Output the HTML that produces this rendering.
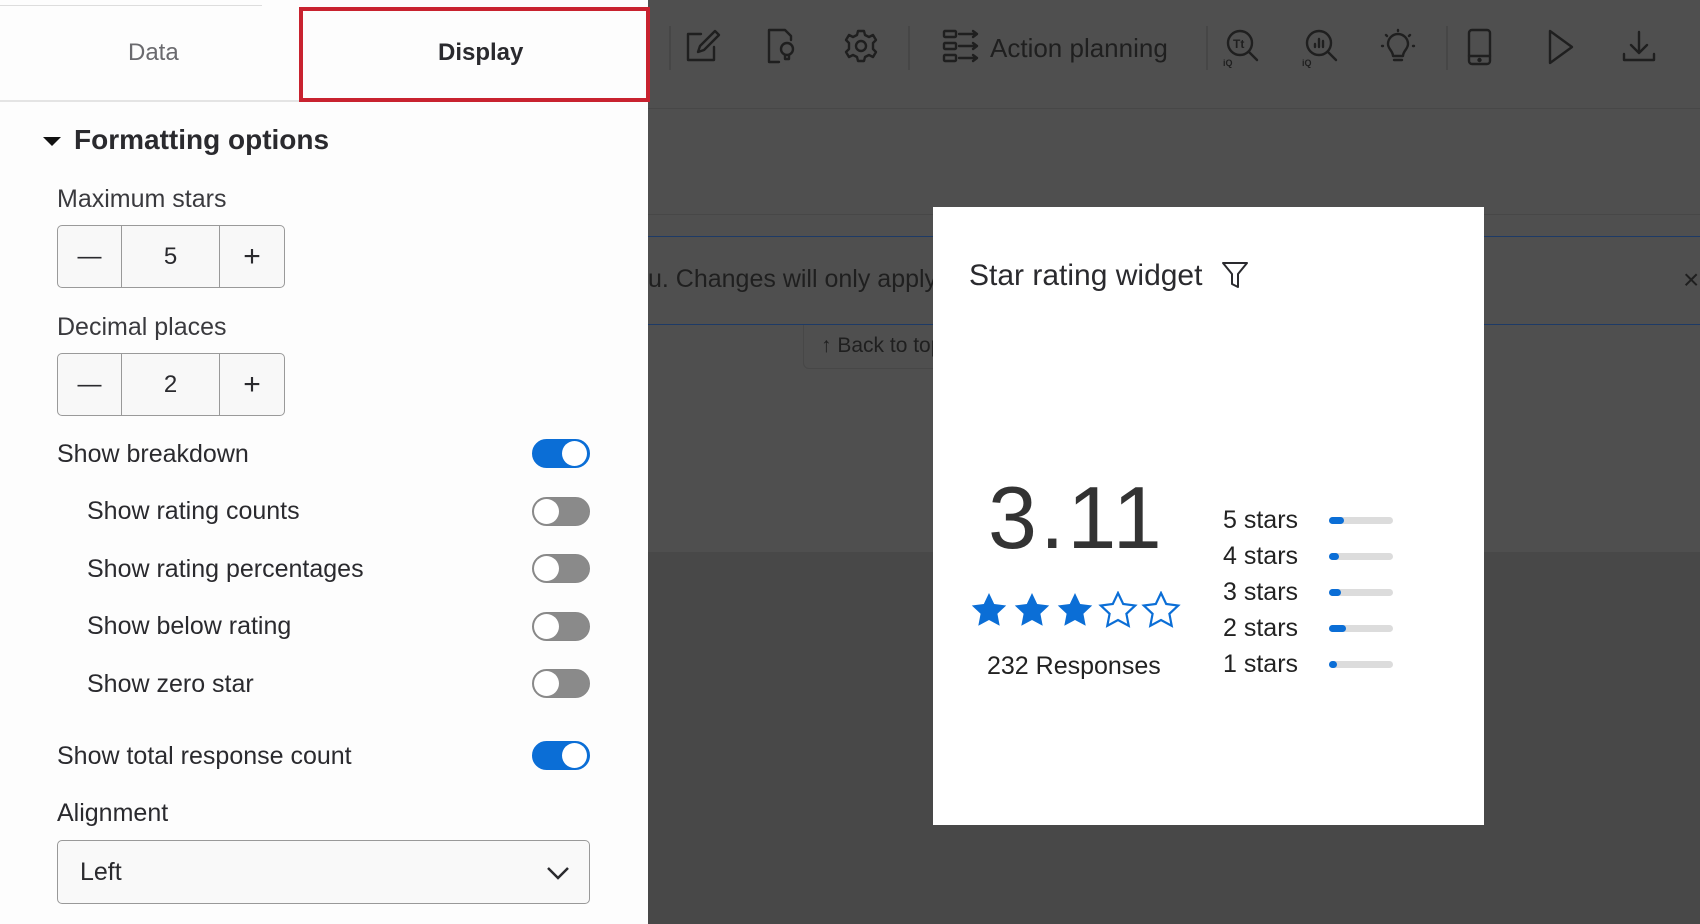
<!DOCTYPE html>
<html><head><meta charset="utf-8"><style>
*{margin:0;padding:0;box-sizing:border-box}
body{width:1700px;height:924px;overflow:hidden;position:relative;background:#4f4f4f;font-family:"Liberation Sans",sans-serif}
.abs{position:absolute}
.panel{left:0;top:0;width:648px;height:924px;background:#fdfdfd}
.t{position:absolute;white-space:nowrap;color:#2a2a2e;font-size:25px;line-height:1}
.step{position:absolute;left:57px;width:228px;height:63px;border:1px solid #9a9a9a;border-radius:5px;background:#f8f8f8}
.step div{position:absolute;top:0;height:100%;display:flex;align-items:center;justify-content:center;font-size:24px;color:#2a2a2e}
.tog{position:absolute;left:532px;width:58px;height:29px;border-radius:15px;background:#8a8a8a;border:1px solid #888}
.tog::after{content:"";position:absolute;top:1px;left:1px;width:25px;height:25px;border-radius:50%;background:#fff}
.tog.on{background:#0b6ed6;border-color:#0b6ed6}
.tog.on::after{left:29px}
.ic{position:absolute;top:28px;stroke:#1f1f1f;fill:none;stroke-width:2.4;stroke-linecap:round;stroke-linejoin:round}
.sep{position:absolute;top:26px;width:2px;height:44px;background:#464646}
.card{left:933px;top:207px;width:551px;height:618px;background:#fff}
.bar{position:absolute;left:1329px;width:64px;height:7px;border-radius:4px;background:#dcdcdc}
.bar i{position:absolute;left:0;top:0;height:7px;border-radius:4px;background:#0b6ed6}
</style></head><body>
<div class="abs" style="left:0;top:552px;width:1700px;height:372px;background:#484848"></div>
<div class="abs" style="left:648px;top:108px;width:1052px;height:1px;background:#474747"></div>
<div class="abs" style="left:648px;top:214px;width:1052px;height:1px;background:#474747"></div>
<div class="abs" style="left:648px;top:236px;width:1052px;height:1px;background:#1d3a66"></div>
<div class="abs" style="left:648px;top:324px;width:1052px;height:1px;background:#1d3a66"></div>
<div class="t" style="left:648px;top:267px;font-size:25px;color:#1f1f1f">u. Changes will only apply</div>
<div class="t" style="left:1683px;top:266px;font-size:28px;color:#1f1f1f">×</div>
<div class="abs" style="left:803px;top:325px;width:150px;height:44px;border:1px solid #474747;border-top:none;border-radius:0 0 6px 6px"></div>
<div class="t" style="left:821px;top:335px;font-size:21px;color:#1f1f1f">↑ Back to top</div>

<!-- toolbar -->
<div class="sep" style="left:669px"></div>
<svg class="ic" style="left:685px" width="36" height="36" viewBox="0 0 36 36"><path d="M16 6H3v26h26V19"/><path d="M30 3l4 4-15 15-6 2 2-6z"/></svg>
<svg class="ic" style="left:765px" width="36" height="36" viewBox="0 0 36 36"><path d="M14 34H4V2h16l6 6v4"/><circle cx="22" cy="21" r="6"/><path d="M20 27v4h4v-4"/></svg>
<svg class="ic" style="left:843px" width="36" height="36" viewBox="0 0 36 36"><circle cx="18" cy="18" r="5"/><path d="M15 3h6l1 4 4 2 4-2 3 5-3 3v6l3 3-3 5-4-2-4 2-1 4h-6l-1-4-4-2-4 2-3-5 3-3v-6l-3-3 3-5 4 2 4-2z"/></svg>
<div class="sep" style="left:908px"></div>
<svg class="ic" style="left:942px" width="40" height="36" viewBox="0 0 40 36"><rect x="2" y="3" width="12" height="6" rx="1"/><rect x="2" y="15" width="12" height="6" rx="1"/><rect x="2" y="27" width="12" height="6" rx="1"/><path d="M17 6h18M31 3l4 3-4 3M17 18h18M31 15l4 3-4 3M17 30h18M31 27l4 3-4 3"/></svg>
<div class="t" style="left:990px;top:35px;font-size:26px;color:#1f1f1f">Action planning</div>
<div class="sep" style="left:1206px"></div>
<svg class="ic" style="left:1222px" width="40" height="40" viewBox="0 0 40 40"><circle cx="18" cy="15" r="12"/><path d="M27 24l8 8"/><text x="11" y="20" font-size="12" font-weight="bold" fill="#1f1f1f" stroke="none" font-family="Liberation Sans">Tt</text><text x="1" y="38" font-size="9" font-weight="bold" fill="#1f1f1f" stroke="none" font-family="Liberation Sans">iQ</text></svg>
<svg class="ic" style="left:1301px" width="40" height="40" viewBox="0 0 40 40"><circle cx="18" cy="15" r="12"/><path d="M27 24l8 8M14 19v-3M18 19v-8M22 19v-6"/><text x="1" y="38" font-size="9" font-weight="bold" fill="#1f1f1f" stroke="none" font-family="Liberation Sans">iQ</text></svg>
<svg class="ic" style="left:1380px" width="36" height="38" viewBox="0 0 36 38"><path d="M18 2v1M6 7l1 1M30 7l-1 1M2 18h1M34 18h-1"/><path d="M13 28c0-5-5-7-5-12a10 10 0 0 1 20 0c0 5-5 7-5 12z"/><path d="M14 32h8"/></svg>
<div class="sep" style="left:1446px"></div>
<svg class="ic" style="left:1467px" width="26" height="38" viewBox="0 0 26 38"><rect x="2" y="2" width="21" height="34" rx="3"/><path d="M2 28h21"/><circle cx="12.5" cy="32" r="1" fill="#1f1f1f"/></svg>
<svg class="ic" style="left:1547px" width="28" height="38" viewBox="0 0 28 38"><path d="M3 3v32l22-16z"/></svg>
<svg class="ic" style="left:1621px" width="36" height="38" viewBox="0 0 36 38"><path d="M18 4v20M10 17l8 8 8-8M3 26v6h30v-6"/></svg>

<!-- panel -->
<div class="abs panel"></div>
<div class="abs" style="left:0;top:5px;width:262px;height:1px;background:#ddd"></div>
<div class="abs" style="left:0;top:100px;width:300px;height:2px;background:#e4e4e4"></div>
<div class="t" style="left:128px;top:41px;font-size:24px;color:#6a6a6e">Data</div>
<div class="abs" style="left:299px;top:7px;width:351px;height:95px;border:4px solid #c8222f"></div>
<div class="t" style="left:438px;top:41px;font-size:24px;font-weight:bold;color:#2a2a2e">Display</div>
<div class="abs" style="left:43px;top:137px;width:0;height:0;border-left:9px solid transparent;border-right:9px solid transparent;border-top:9px solid #111"></div>
<div class="t" style="left:74px;top:126px;font-size:28px;font-weight:bold;color:#2a2a2e">Formatting options</div>
<div class="t" style="left:57px;top:187px;color:#3a3a3e">Maximum stars</div>
<div class="step" style="top:225px"><div style="left:0;width:64px;border-right:1px solid #999">—</div><div style="left:64px;width:98px;border-right:1px solid #999">5</div><div style="left:162px;width:64px;font-size:30px;font-weight:300">+</div></div>
<div class="t" style="left:57px;top:315px;color:#3a3a3e">Decimal places</div>
<div class="step" style="top:353px"><div style="left:0;width:64px;border-right:1px solid #999">—</div><div style="left:64px;width:98px;border-right:1px solid #999">2</div><div style="left:162px;width:64px;font-size:30px;font-weight:300">+</div></div>
<div class="t" style="left:57px;top:442px">Show breakdown</div><div class="tog on" style="top:439px"></div>
<div class="t" style="left:87px;top:499px">Show rating counts</div><div class="tog" style="top:497px"></div>
<div class="t" style="left:87px;top:557px">Show rating percentages</div><div class="tog" style="top:554px"></div>
<div class="t" style="left:87px;top:614px">Show below rating</div><div class="tog" style="top:612px"></div>
<div class="t" style="left:87px;top:672px">Show zero star</div><div class="tog" style="top:669px"></div>
<div class="t" style="left:57px;top:744px">Show total response count</div><div class="tog on" style="top:741px"></div>
<div class="t" style="left:57px;top:801px">Alignment</div>
<div class="abs" style="left:57px;top:840px;width:533px;height:64px;border:1px solid #999;border-radius:5px;background:#f9f9f9"></div>
<div class="t" style="left:80px;top:860px">Left</div>
<svg class="abs" style="left:546px;top:866px" width="24" height="14" viewBox="0 0 24 14"><path d="M2 2l10 10 10-10" stroke="#2a2a2e" stroke-width="2.5" fill="none"/></svg>

<!-- card -->
<div class="abs card"></div>
<div class="t" style="left:969px;top:261px;font-size:30px;color:#2a2a2e">Star rating widget</div>
<svg class="abs" style="left:1221px;top:260px" width="28" height="30" viewBox="0 0 28 30"><path d="M2 3h24l-9 11v13l-6-3V14z" stroke="#2a2a2e" stroke-width="2" fill="none" stroke-linejoin="round"/></svg>
<div class="t" style="left:988px;top:474px;font-size:88px;color:#333;letter-spacing:3px">3.11</div>
<svg class="abs" style="left:970px;top:591px" width="218" height="40" viewBox="0 0 218 40">
<defs><path id="s" d="M19 2l5.2 11 12 1.5-8.8 8.3 2.3 12L19 29l-10.7 5.8 2.3-12L1.8 14.5l12-1.5z"/></defs>
<use href="#s" fill="#0b6ed6"/><use href="#s" x="43" fill="#0b6ed6"/><use href="#s" x="86" fill="#0b6ed6"/>
<use href="#s" x="129" fill="none" stroke="#0b6ed6" stroke-width="2.2"/><use href="#s" x="172" fill="none" stroke="#0b6ed6" stroke-width="2.2"/></svg>
<div class="t" style="left:987px;top:654px;font-size:25px;color:#222">232 Responses</div>
<div class="t" style="left:1223px;top:508px;font-size:25px;color:#222">5 stars</div><div class="bar" style="top:517px"><i style="width:15px"></i></div>
<div class="t" style="left:1223px;top:544px;font-size:25px;color:#222">4 stars</div><div class="bar" style="top:553px"><i style="width:10px"></i></div>
<div class="t" style="left:1223px;top:580px;font-size:25px;color:#222">3 stars</div><div class="bar" style="top:589px"><i style="width:12px"></i></div>
<div class="t" style="left:1223px;top:616px;font-size:25px;color:#222">2 stars</div><div class="bar" style="top:625px"><i style="width:17px"></i></div>
<div class="t" style="left:1223px;top:652px;font-size:25px;color:#222">1 stars</div><div class="bar" style="top:661px"><i style="width:8px"></i></div>
</body></html>
